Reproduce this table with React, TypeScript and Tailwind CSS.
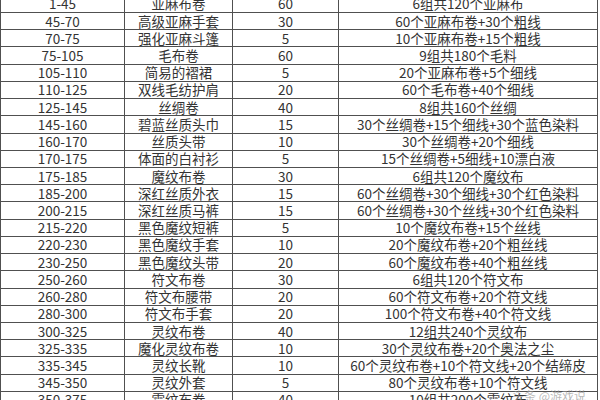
const rows: [string, string, string, string][] = [
  ["1-45", "亚麻布卷", "60", "6组共120个亚麻布"],
  ["45-70", "高级亚麻手套", "30", "60个亚麻布卷+30个粗线"],
  ["70-75", "强化亚麻斗篷", "5", "10个亚麻布卷+15个粗线"],
  ["75-105", "毛布卷", "60", "9组共180个毛料"],
  ["105-110", "简易的褶裙", "5", "20个亚麻布卷+5个细线"],
  ["110-125", "双线毛纺护肩", "20", "60个毛布卷+40个细线"],
  ["125-145", "丝绸卷", "40", "8组共160个丝绸"],
  ["145-160", "碧蓝丝质头巾", "15", "30个丝绸卷+15个细线+30个蓝色染料"],
  ["160-170", "丝质头带", "10", "30个丝绸卷+20个细线"],
  ["170-175", "体面的白衬衫", "5", "15个丝绸卷+5细线+10漂白液"],
  ["175-185", "魔纹布卷", "30", "6组共120个魔纹布"],
  ["185-200", "深红丝质外衣", "15", "60个丝绸卷+30个细线+30个红色染料"],
  ["200-215", "深红丝质马裤", "15", "60个丝绸卷+30个丝线+30个红色染料"],
  ["215-220", "黑色魔纹短裤", "5", "10个魔纹布卷+15个丝线"],
  ["220-230", "黑色魔纹手套", "10", "20个魔纹布卷+20个粗丝线"],
  ["230-250", "黑色魔纹头带", "20", "60个魔纹布卷+40个粗丝线"],
  ["250-260", "符文布卷", "30", "6组共120个符文布"],
  ["260-280", "符文布腰带", "20", "60个符文布卷+20个符文线"],
  ["280-300", "符文布手套", "20", "100个符文布卷+40个符文线"],
  ["300-325", "灵纹布卷", "40", "12组共240个灵纹布"],
  ["325-335", "魔化灵纹布卷", "10", "30个灵纹布卷+20个奥法之尘"],
  ["335-345", "灵纹长靴", "10", "60个灵纹布卷+10个符文线+20个结缔皮"],
  ["345-350", "灵纹外套", "5", "80个灵纹布卷+10个符文线"],
  ["350-375", "霜纹布卷", "40", "10组共200个霜纹布"],
];

export default function App() {
  return (
    <div
      className="relative w-[600px] h-[400px] overflow-hidden bg-white text-[#333333] text-[13.5px]"
      style={{ fontFamily: '"Noto Sans CJK SC", "Noto Sans", sans-serif' }}
    >
      <div className="mt-[-4.23px] w-[598px] bg-[#505050] px-px grid grid-cols-[123px_107px_105px_258px] auto-rows-[16.23px] gap-px">
        {rows.map((r, i) =>
          r.map((cell, j) => (
            <div
              key={`${i}-${j}`}
              className="bg-white flex items-center justify-center whitespace-nowrap leading-[15px]"
            >
              {cell}
            </div>
          ))
        )}
      </div>
      <div className="absolute right-[14px] bottom-[-3px] text-[12px] leading-[14px] text-[#9a9a9a]/70 whitespace-nowrap">
        头条 @游戏说
      </div>
    </div>
  );
}
